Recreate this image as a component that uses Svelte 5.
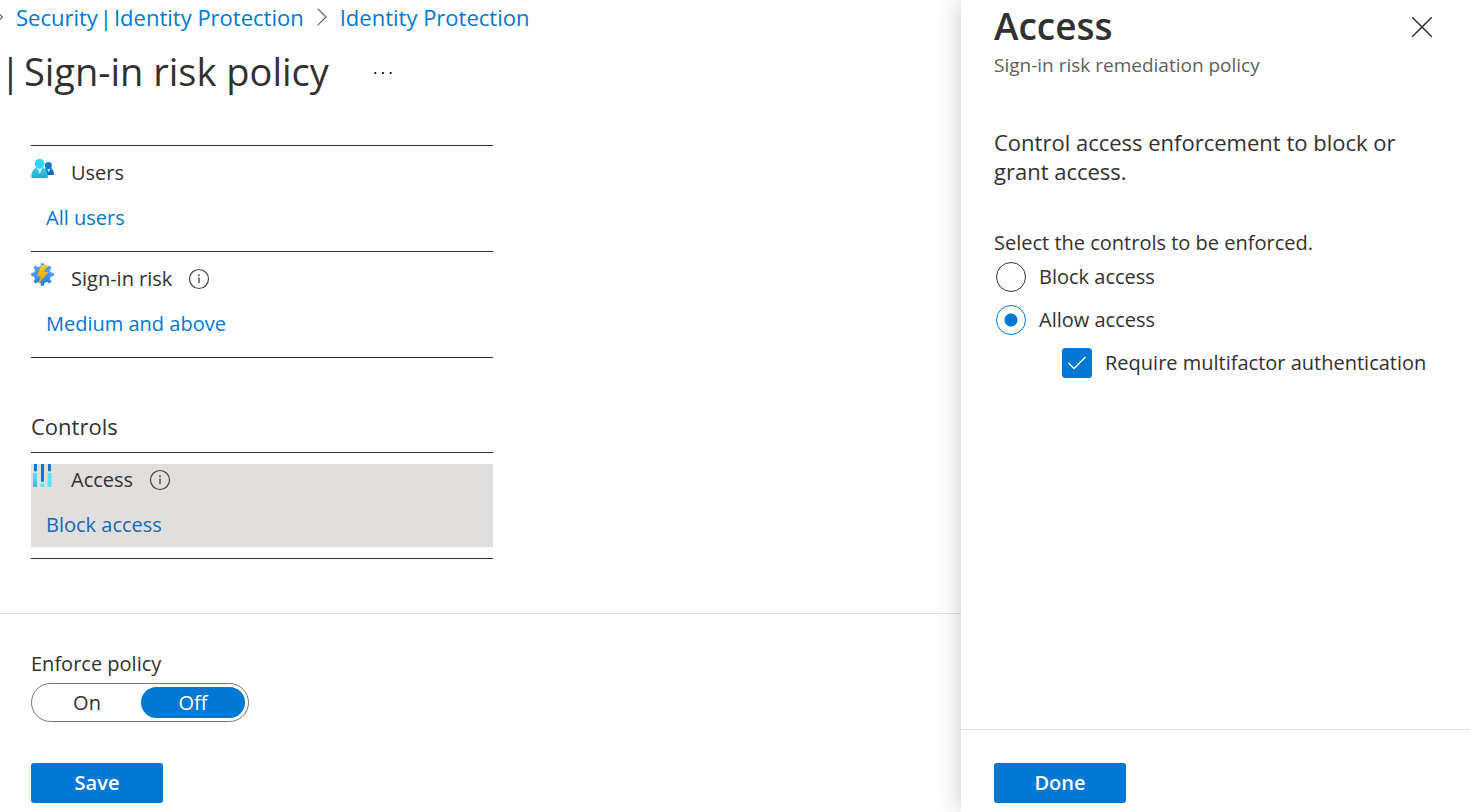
<script>
  let enforce = $state('off');
  let access = $state('allow');
  let requireMfa = $state(true);
</script>

{#snippet info(label)}
  <button class="info" type="button" aria-label={label}>
    <svg width="22" height="22" viewBox="0 0 22 22" aria-hidden="true">
      <circle cx="11" cy="11" r="9.5" fill="none" stroke="currentColor" stroke-width="1.2" />
      <path d="M11 9.5V15" stroke="currentColor" stroke-width="1.4" />
      <circle cx="11" cy="7.2" r="0.9" fill="currentColor" />
    </svg>
  </button>
{/snippet}

<div class="page">
  <main>
    <nav class="crumbs" aria-label="Breadcrumb">
      <svg width="3" height="10" viewBox="0 0 3 10" aria-hidden="true">
        <path d="M-2 0.5L2.5 5L-2 9.5" fill="none" stroke="#605e5c" stroke-width="1.2" />
      </svg>
      <a class="split" href="#security"><span>Security</span><span>|</span><span>Identity Protection</span></a>
      <svg width="10" height="18" viewBox="0 0 10 18" aria-hidden="true">
        <path d="M0.8 0.8L9 9L0.8 17.2" fill="none" stroke="#605e5c" stroke-width="1.2" />
      </svg>
      <a href="#protection">Identity Protection</a>
    </nav>

    <header class="title">
      <h1><span>|</span><span>Sign-in risk policy</span></h1>
      <button class="more" type="button" aria-label="More options">
        <svg width="20" height="4" viewBox="0 0 20 4" aria-hidden="true">
          <circle cx="2.3" cy="2" r="1.1" /><circle cx="10" cy="2" r="1.1" /><circle cx="17.7" cy="2" r="1.1" />
        </svg>
      </button>
    </header>

    <div class="content">
      <section class="list">
        <div class="row">
          <div class="item">
            <svg class="icon" width="24" height="23" viewBox="0 0 24 23" aria-hidden="true">
              <defs>
                <linearGradient id="front" x1="0" y1="0" x2="0" y2="1">
                  <stop offset="0" stop-color="#35d6f2" /><stop offset="1" stop-color="#2aa5cb" />
                </linearGradient>
                <linearGradient id="back" x1="0" y1="0" x2="0" y2="1">
                  <stop offset="0" stop-color="#0a84e0" /><stop offset="1" stop-color="#0460b4" />
                </linearGradient>
              </defs>
              <path d="M12 18H21.6Q23.2 18 23 16.4C22.4 12.6 20.8 10.6 17.6 10.6C15.4 10.6 13 12 12 14Z" fill="url(#back)" />
              <path d="M16 11.4L17.8 15.4L19.4 11.4Z" fill="#d8f0fb" />
              <circle cx="17.4" cy="8.4" r="3.5" fill="#0a78d4" />
              <path d="M1.8 21H15.6Q17.2 21 17 19.2C16.4 13.4 14.2 10 8.7 10C3.2 10 1 13.4 0.2 19.2Q0.1 21 1.8 21Z" fill="url(#front)" />
              <path d="M6.2 11L8.7 17L11.2 11Z" fill="#e4f8fd" />
              <circle cx="8.6" cy="6.8" r="4.9" fill="#32d4f0" />
            </svg>
            <div class="text">
              <div class="label">Users</div>
              <a href="#users">All users</a>
            </div>
          </div>
        </div>
        <div class="row">
          <div class="item">
            <svg class="icon" width="24" height="23" viewBox="0 0 24 23" aria-hidden="true">
              <defs>
                <linearGradient id="gear" gradientUnits="userSpaceOnUse" x1="0" y1="0" x2="0" y2="23">
                  <stop offset="0" stop-color="#5ea0ef" /><stop offset="0.5" stop-color="#4a96ea" /><stop offset="1" stop-color="#1a7ad6" />
                </linearGradient>
                <linearGradient id="bolt" x1="0" y1="0" x2="0" y2="1">
                  <stop offset="0" stop-color="#ffd400" /><stop offset="1" stop-color="#f78d1e" />
                </linearGradient>
              </defs>
              <g fill="url(#gear)">
                <circle cx="11.5" cy="11.5" r="8.6" />
                <path d="M9.3 4L10 0.2H13L13.7 4V19L13 22.8H10L9.3 19Z" />
                <path d="M4 9.3L0.2 10V13L4 13.7H19L22.8 13V10L19 9.3Z" />
                <path d="M4.6 7.8L2.4 4.6L4.6 2.4L7.8 4.6L18.4 15.2L20.6 18.4L18.4 20.6L15.2 18.4Z" />
                <path d="M15.2 4.6L18.4 2.4L20.6 4.6L18.4 7.8L7.8 18.4L4.6 20.6L2.4 18.4L4.6 15.2Z" />
              </g>
              <path d="M10.6 2H16.8L12.8 9H17.2L6.8 22L9.6 13.2H6Z" fill="url(#bolt)" />
            </svg>
            <div class="text">
              <div class="label">Sign-in risk {@render info('About sign-in risk')}</div>
              <a href="#risk">Medium and above</a>
            </div>
          </div>
        </div>
      </section>

      <section class="list">
        <h2>Controls</h2>
        <div class="row">
          <div class="item selected">
            <svg class="icon" width="24" height="23" viewBox="0 0 24 23" aria-hidden="true">
              <defs>
                <linearGradient id="bar" x1="0" y1="0" x2="0" y2="1">
                  <stop offset="0" stop-color="#50e6ff" /><stop offset="1" stop-color="#32bedd" />
                </linearGradient>
              </defs>
              <path d="M3 0H6V6Q6 7.5 4.5 7.5T3 6Z M10 0H13V17Q13 18 11.5 18T10 17Z M17 0H20V6Q20 7.5 18.5 7.5T17 6Z" fill="#0078d4" />
              <rect x="2" y="9" width="4" height="14" rx="0.6" fill="url(#bar)" />
              <rect x="9.5" y="19.5" width="4" height="3.5" rx="0.6" fill="#50e6ff" />
              <rect x="16.5" y="9" width="4" height="14" rx="0.6" fill="#50e6ff" />
            </svg>
            <div class="text">
              <div class="label">Access {@render info('About access')}</div>
              <a href="#access">Block access</a>
            </div>
          </div>
        </div>
      </section>
    </div>

    <footer>
      <fieldset>
        <legend>Enforce policy</legend>
        <div class="toggle">
          <label><input type="radio" name="enforce" value="on" bind:group={enforce} /><span>On</span></label>
          <label><input type="radio" name="enforce" value="off" bind:group={enforce} /><span>Off</span></label>
        </div>
      </fieldset>
      <button class="primary" type="button">Save</button>
    </footer>
  </main>

  <aside aria-labelledby="pane-title">
    <header class="pane-head">
      <div>
        <h2 id="pane-title">Access</h2>
        <p class="sub">Sign-in risk remediation policy</p>
      </div>
      <button class="close" type="button" aria-label="Close">
        <svg width="22" height="22" viewBox="0 0 22 22" aria-hidden="true">
          <path d="M1.2 1.2L20.8 20.8M20.8 1.2L1.2 20.8" stroke="#323130" stroke-width="1.5" />
        </svg>
      </button>
    </header>

    <div class="pane-body">
      <p class="intro">Control access enforcement to block or grant access.</p>
      <fieldset class="choices">
        <legend>Select the controls to be enforced.</legend>
        <label><input type="radio" name="access" value="block" bind:group={access} />Block access</label>
        <label><input type="radio" name="access" value="allow" bind:group={access} />Allow access</label>
        <label class="nested">
          <span class="box">
            <input type="checkbox" bind:checked={requireMfa} />
            {#if requireMfa}
              <svg width="20" height="16" viewBox="0 0 20 16" aria-hidden="true">
                <path d="M1.5 8L7 13.4L18.5 2" fill="none" stroke="#fff" stroke-width="1.4" />
              </svg>
            {/if}
          </span>
          Require multifactor authentication
        </label>
      </fieldset>
    </div>

    <footer class="pane-foot">
      <button class="primary" type="button">Done</button>
    </footer>
  </aside>
</div>

<style>
  :global(body) {
    margin: 0;
    background: #fff;
  }
  .page {
    display: grid;
    grid-template-columns: minmax(0, 961fr) minmax(0, 509fr);
    min-height: 100vh;
    overflow: hidden;
    color: #323130;
    font: 20px/30px "Open Sans", "Noto Sans", sans-serif;
  }
  .page :is(h1, h2, p, fieldset) {
    margin: 0;
    padding: 0;
    border: 0;
    min-width: 0;
  }
  legend {
    padding: 0;
  }
  button {
    padding: 0;
    border: 0;
    background: none;
    color: inherit;
    font: inherit;
    cursor: pointer;
  }
  svg {
    display: block;
    flex: none;
  }
  a {
    color: #0078d4;
    text-decoration: none;
  }
  main {
    display: flex;
    flex-direction: column;
  }
  .crumbs {
    display: flex;
    align-items: center;
    gap: 13px;
    height: 34px;
    font-size: 22px;
    white-space: nowrap;
  }
  .split {
    display: flex;
    gap: 2px;
  }
  .title {
    display: flex;
    align-items: center;
    gap: 44px;
    padding-top: 11px;
  }
  h1 {
    display: flex;
    gap: 3px;
    font-size: 38px;
    font-weight: 400;
    line-height: 52px;
    white-space: nowrap;
  }
  .more {
    padding-top: 4px;
  }
  .content {
    display: flex;
    flex-direction: column;
    gap: 53px;
    flex: 1;
    padding: 48px 31px 54px;
  }
  .list {
    width: 100%;
    max-width: 462px;
    border-bottom: 1px solid #323130;
  }
  .page .list h2 {
    margin-bottom: 11px;
    font-size: 22px;
    font-weight: 400;
    line-height: 30px;
  }
  .row {
    border-top: 1px solid #323130;
    padding: 11px 0;
  }
  .item {
    display: flex;
    gap: 16px;
    padding-bottom: 7px;
  }
  .selected {
    background: #e1dfdd;
  }
  .selected a {
    color: #1768b3;
  }
  .text {
    display: flex;
    flex-direction: column;
    gap: 15px;
    padding-top: 1px;
  }
  .text a {
    margin-left: -25px;
  }
  .label {
    display: flex;
    align-items: center;
    gap: 16px;
  }
  .info {
    color: #484644;
  }
  main footer {
    display: flex;
    flex-direction: column;
    align-items: flex-start;
    gap: 41px;
    padding: 35px 31px 9px;
    border-top: 1px solid #e1dfdd;
  }
  .toggle {
    display: flex;
    gap: 2px;
    margin-top: 4px;
    padding: 3px;
    border: 1px solid #797775;
    border-radius: 20px;
  }
  .toggle label {
    position: relative;
    cursor: pointer;
  }
  .toggle input {
    position: absolute;
    inset: 0;
    margin: 0;
    opacity: 0;
  }
  .toggle span {
    display: block;
    width: 104px;
    border-radius: 16px;
    line-height: 31px;
    text-align: center;
  }
  .toggle input:checked + span {
    background: #0078d4;
    color: #fff;
  }
  .primary {
    width: 132px;
    height: 40px;
    border-radius: 3px;
    background: #0078d4;
    color: #fff;
    font-weight: 600;
  }
  aside {
    display: flex;
    flex-direction: column;
    background: #fff;
    box-shadow: 0 0 24px rgba(0, 0, 0, 0.22);
  }
  .pane-head {
    display: flex;
    justify-content: space-between;
    align-items: flex-start;
    padding: 1px 37px 0 33px;
  }
  .pane-head h2 {
    font-size: 37px;
    font-weight: 600;
    line-height: 50px;
  }
  .sub {
    padding-top: 1px;
    color: #605e5c;
    font-size: 19px;
    line-height: 28px;
  }
  .close {
    margin-top: 15px;
  }
  .pane-body {
    flex: 1;
    padding: 49px 33px 0;
  }
  .intro {
    font-size: 22px;
    line-height: 29px;
  }
  .page .choices {
    display: flex;
    flex-direction: column;
    gap: 13px;
    margin-top: 42px;
  }
  .choices legend {
    margin-bottom: 4px;
  }
  .choices label {
    display: flex;
    align-items: center;
    gap: 13px;
    padding-left: 2px;
    white-space: nowrap;
  }
  .choices .nested {
    padding-left: 68px;
  }
  .choices input {
    appearance: none;
    flex: none;
    width: 30px;
    height: 30px;
    margin: 0;
    border: 1px solid #323130;
    border-radius: 50%;
  }
  .choices input[type="radio"]:checked {
    border-color: #0078d4;
    background: radial-gradient(circle, #0078d4 6px, transparent 7px);
  }
  .box {
    display: grid;
    place-items: center;
  }
  .box > * {
    grid-area: 1 / 1;
  }
  .box svg {
    pointer-events: none;
  }
  .choices .box input {
    border-radius: 3px;
  }
  .choices .box input:checked {
    border-color: #0078d4;
    background: #0078d4;
  }
  .pane-foot {
    padding: 33px 33px 9px;
    border-top: 1px solid #e1dfdd;
  }
  .pane-foot .primary {
    display: block;
  }
</style>
